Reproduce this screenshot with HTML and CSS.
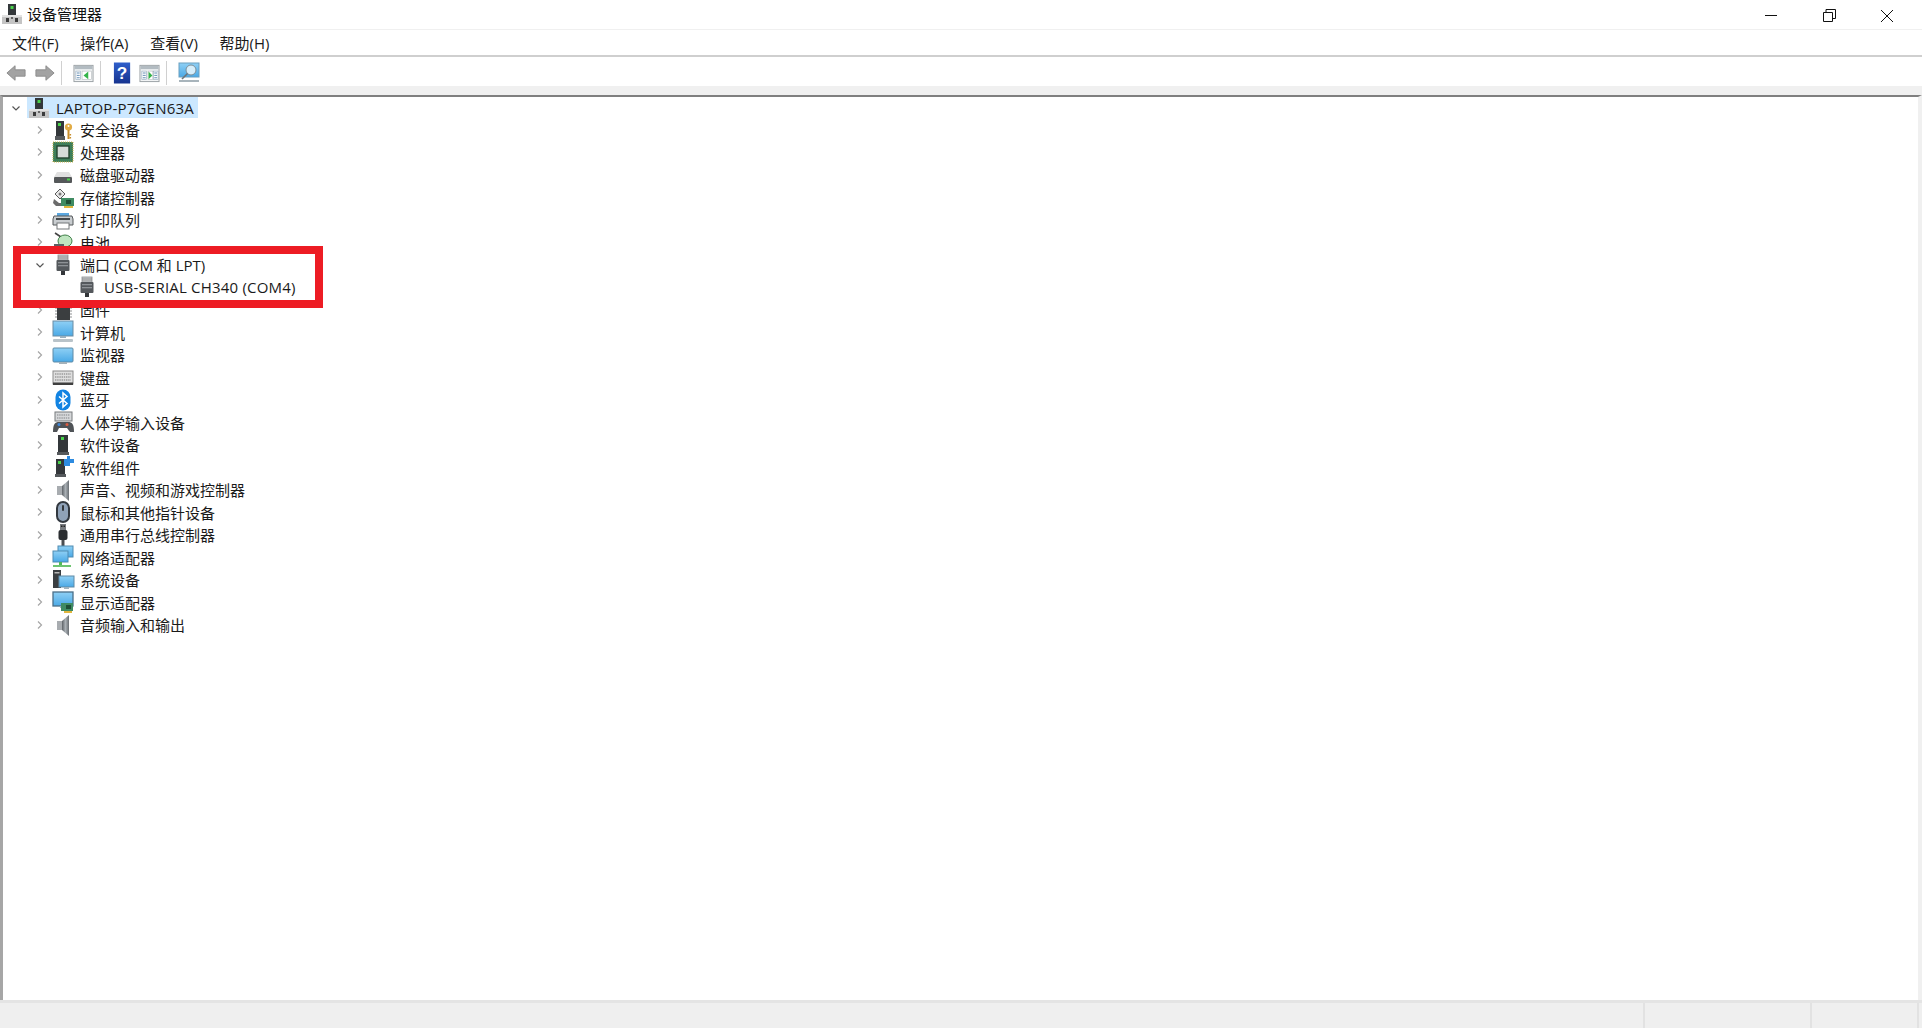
FILE: index.html
```html
<!DOCTYPE html>
<html lang="zh-CN">
<head>
<meta charset="utf-8">
<title>设备管理器</title>
<link rel="stylesheet" href="styles.css">
</head>
<body>
<svg class="defs" width="0" height="0" aria-hidden="true">
  <defs>
    <linearGradient id="screen" x1="0" y1="0" x2="0" y2="1"><stop offset="0" stop-color="#8fd0f5"/><stop offset="1" stop-color="#4aa9e6"/></linearGradient>
    <linearGradient id="metal" x1="0" y1="0" x2="1" y2="0"><stop offset="0" stop-color="#5e6368"/><stop offset=".5" stop-color="#aab0b5"/><stop offset="1" stop-color="#6a6f74"/></linearGradient>
    <linearGradient id="help" x1="0" y1="0" x2="0" y2="1"><stop offset="0" stop-color="#2f5fcb"/><stop offset="1" stop-color="#16338f"/></linearGradient>
    <symbol id="i-host" viewBox="0 0 24 24"><rect x="8" y="2" width="8" height="13" fill="#33373a"/><rect x="10.5" y="4" width="3" height="3" fill="#49d24a"/><rect x="2" y="13" width="20" height="9" fill="#c4c4c4"/><rect x="2" y="13" width="20" height="2" fill="#e2e2e2"/><rect x="6" y="16" width="3" height="4" fill="#3c3c3c"/><rect x="15" y="16" width="3" height="4" fill="#3c3c3c"/><rect x="11" y="15" width="2" height="2" fill="#666"/></symbol>
    <symbol id="i-security" viewBox="0 0 24 24"><rect x="5" y="3" width="8" height="15" fill="#33373a"/><rect x="7" y="5" width="3" height="3" fill="#49d24a"/><rect x="4" y="18" width="10" height="4" fill="#55595c"/><circle cx="17.5" cy="9" r="3.6" fill="#e2ac45"/><circle cx="17.5" cy="8" r="1" fill="#fff"/><rect x="16.5" y="12" width="2" height="9" fill="#c78d2a"/><rect x="18.5" y="16" width="1.6" height="1.5" fill="#c78d2a"/><rect x="18.5" y="19" width="1.6" height="1.5" fill="#c78d2a"/></symbol>
    <symbol id="i-cpu" viewBox="0 0 24 24"><rect x="2" y="2" width="20" height="20" fill="#3e7f5a"/><rect x="2" y="2" width="20" height="20" fill="none" stroke="#c7b04a" stroke-width="1" stroke-dasharray="1 1"/><rect x="6" y="6" width="12" height="12" fill="#d6dcd8" stroke="#24442f" stroke-width="1.4"/></symbol>
    <symbol id="i-disk" viewBox="0 0 24 24"><path d="M6 9h12l3 5H3z" fill="#e0e0e0"/><rect x="3" y="14" width="18" height="6" rx="1" fill="#55585a"/><rect x="16" y="15.5" width="3" height="2" fill="#4ad04a"/></symbol>
    <symbol id="i-storage" viewBox="0 0 24 24"><path d="M4 9l5-5 5 5-5 5z" fill="#e8e8e8" stroke="#5a5a5a"/><circle cx="9" cy="9" r="1.5" fill="#7a7a7a"/><path d="M3 14l5 4h3v3H5l-3-3z" fill="#6b6b6b"/><rect x="10" y="13" width="13" height="8" fill="#3f8b62"/><rect x="15" y="15" width="5" height="4" fill="#1f4f36"/><rect x="13" y="21" width="9" height="2" fill="#e0b63e"/></symbol>
    <symbol id="i-printer" viewBox="0 0 24 24"><rect x="6" y="5" width="12" height="3" fill="#5ba7e0"/><path d="M3 8h18l1 3v6H2v-6z" fill="#c9cdd0" stroke="#55585b"/><rect x="5" y="10" width="14" height="2" fill="#44484b"/><rect x="6" y="15" width="12" height="6" fill="#fff" stroke="#75787a"/></symbol>
    <symbol id="i-battery" viewBox="0 0 24 24"><path d="M4 3l6 4" stroke="#444" stroke-width="1.6"/><ellipse cx="14" cy="11" rx="7" ry="6" fill="#bfe5c0" stroke="#3f7f48"/><rect x="3" y="14" width="10" height="5" fill="#5d6164"/><rect x="11" y="16" width="11" height="6" fill="#e0b63e"/></symbol>
    <symbol id="i-port" viewBox="0 0 24 24"><rect x="7" y="2" width="10" height="5" fill="#c9ccce" stroke="#8a8d90" stroke-width=".8"/><path d="M8 3v3M10 3v3M12 3v3M14 3v3M16 3v3" stroke="#777" stroke-width=".7"/><rect x="5.5" y="7" width="13" height="11" rx="1" fill="#54585c"/><rect x="7" y="9" width="10" height="1.3" fill="#8e9296"/><rect x="7" y="12" width="10" height="1.3" fill="#8e9296"/><rect x="10" y="18" width="4" height="4" fill="#33363a"/></symbol>
    <symbol id="i-firmware" viewBox="0 0 24 24"><rect x="6" y="2" width="13" height="20" fill="#3b3e40"/><path d="M4 4h2M4 7h2M4 10h2M4 13h2M4 16h2M4 19h2M19 4h2M19 7h2M19 10h2M19 13h2M19 16h2M19 19h2" stroke="#8d9092" stroke-width="1.2"/><rect x="8" y="4" width="9" height="3" fill="#6a6d70"/></symbol>
    <symbol id="i-computer" viewBox="0 0 24 24"><rect x="2" y="1" width="20" height="15" fill="url(#screen)" stroke="#6a8ca3"/><rect x="9" y="16" width="6" height="2" fill="#9ab0be"/><rect x="2" y="19" width="20" height="3" rx="1" fill="#b9c3c9"/></symbol>
    <symbol id="i-monitor" viewBox="0 0 24 24"><rect x="2" y="5" width="20" height="14" rx="1" fill="url(#screen)" stroke="#5e8aa6"/><rect x="8" y="19" width="8" height="2" fill="#a5b2ba"/></symbol>
    <symbol id="i-keyboard" viewBox="0 0 24 24"><rect x="2" y="6" width="20" height="13" fill="#dfdfdf" stroke="#8b8b8b"/><path d="M4 9h16M4 12h16M4 15h16" stroke="#9b9b9b" stroke-width="1.4" stroke-dasharray="1.4 .8"/><rect x="2" y="17.5" width="20" height="2.5" fill="#3f3f3f"/></symbol>
    <symbol id="i-bluetooth" viewBox="0 0 24 24"><rect x="4.5" y="1.5" width="15" height="21" rx="7.5" fill="#1283e2"/><path d="M8 8.5l8 7-4 3.5V5l4 3.5-8 7" fill="none" stroke="#fff" stroke-width="1.5"/></symbol>
    <symbol id="i-hid" viewBox="0 0 24 24"><rect x="4" y="2" width="17" height="9" fill="#d6d8da" stroke="#777a7d"/><path d="M6 5h13M6 8h13" stroke="#808386" stroke-dasharray="1.4 .8"/><path d="M2 22c0-8 2-10 6-10h9c4 0 6 2 6 10h-4l-3-4H8l-2 4z" fill="#4f5357"/><circle cx="8" cy="14.5" r="1.5" fill="#3f86d8"/><circle cx="16" cy="14.5" r="1.5" fill="#d85a3f"/></symbol>
    <symbol id="i-swdev" viewBox="0 0 24 24"><rect x="7" y="2" width="10" height="17" fill="#33373a"/><rect x="10" y="4" width="3" height="3" fill="#49d24a"/><rect x="6" y="19" width="12" height="3" fill="#55595c"/></symbol>
    <symbol id="i-swcomp" viewBox="0 0 24 24"><rect x="5" y="4" width="9" height="15" fill="#33373a"/><rect x="7" y="6" width="3" height="3" fill="#49d24a"/><rect x="4" y="19" width="11" height="3" fill="#55595c"/><path d="M13 4h3V1h3v3h4v4h-4v3h-6z" fill="#2d8be0"/></symbol>
    <symbol id="i-sound" viewBox="0 0 24 24"><rect x="6" y="8" width="5" height="9" fill="#a8acb0"/><path d="M11 8l7-6v21l-7-6z" fill="url(#metal)"/></symbol>
    <symbol id="i-mouse" viewBox="0 0 24 24"><rect x="5" y="1" width="14" height="22" rx="7" fill="#32383f"/><rect x="7" y="3" width="10" height="18" rx="5" fill="#8fa2b8"/><rect x="11" y="5" width="2" height="6" rx="1" fill="#33383d"/></symbol>
    <symbol id="i-usb" viewBox="0 0 24 24"><rect x="9" y="1" width="6" height="6" fill="#777b7f"/><rect x="10" y="2.5" width="1.5" height="1.5" fill="#222"/><rect x="12.5" y="2.5" width="1.5" height="1.5" fill="#222"/><rect x="7.5" y="7" width="9" height="10" rx="2" fill="#2b2e31"/><rect x="10.5" y="17" width="3" height="6" fill="#4a4e52"/></symbol>
    <symbol id="i-network" viewBox="0 0 24 24"><rect x="7" y="1" width="15" height="11" fill="url(#screen)" stroke="#4f8bb2"/><rect x="2" y="6" width="15" height="11" fill="url(#screen)" stroke="#4f8bb2"/><rect x="8" y="17" width="3" height="3" fill="#54b85a"/><rect x="2" y="20" width="18" height="2" fill="#6fc470"/></symbol>
    <symbol id="i-system" viewBox="0 0 24 24"><rect x="2" y="2" width="8" height="18" fill="#3a3e41"/><rect x="3.5" y="4" width="5" height="1.5" fill="#b7b7b7"/><rect x="8" y="8" width="15" height="11" fill="url(#screen)" stroke="#5e8aa6"/><rect x="13" y="19" width="5" height="2" fill="#9fb2bd"/></symbol>
    <symbol id="i-display" viewBox="0 0 24 24"><rect x="2" y="2" width="20" height="14" fill="url(#screen)" stroke="#4a6f88" stroke-width="1.3"/><rect x="9" y="16" width="5" height="2" fill="#9fb2bd"/><rect x="10" y="13" width="12" height="8" fill="#3f8b62"/><rect x="15" y="15" width="5" height="4" fill="#1f4f36"/><rect x="13" y="21" width="8" height="2" fill="#e0b63e"/></symbol>
    <symbol id="i-chev-r" viewBox="0 0 16 16"><path d="M6 4.500L9.500 8 6 11.500" fill="none" stroke="#a6a6a6" stroke-width="1.200"/></symbol>
    <symbol id="i-chev-d" viewBox="0 0 16 16"><path d="M4.500 6.500L8 10l3.500-3.500" fill="none" stroke="#555" stroke-width="1.200"/></symbol>
    <symbol id="i-panel" viewBox="0 0 22 22"><rect x="1" y="3" width="20" height="17" fill="#f2f4f5" stroke="#9aa0a4"/><rect x="1.500" y="3.500" width="19" height="3.500" fill="#b3bcc2"/><rect x="3" y="9" width="5" height="9" fill="#fff" stroke="#8ba3b8" stroke-width=".6"/><path d="M4 11h3M4 13.500h3M4 16h3" stroke="#5c88b0"/></symbol>
  </defs>
</svg>
<div class="window">
  <header class="titlebar">
    <svg class="title-icon"><use href="#i-host"/></svg>
    <span class="title-text">设备管理器</span>
    <div class="controls">
      <svg class="ctl" viewBox="0 0 48 24"><path d="M18 13.500h12" stroke="#111" fill="none"/></svg>
      <svg class="ctl" viewBox="0 0 48 24"><path d="M18.500 10.500h9v9h-9zM21 10V7.500h9.500v9H28" stroke="#111" fill="none"/></svg>
      <svg class="ctl" viewBox="0 0 48 24"><path d="M18 8l12 12M30 8L18 20" stroke="#111" fill="none"/></svg>
    </div>
  </header>
  <nav class="menubar">
    <span class="menu-item">文件(F)</span>
    <span class="menu-item">操作(A)</span>
    <span class="menu-item">查看(V)</span>
    <span class="menu-item">帮助(H)</span>
  </nav>
  <div class="toolbar">
    <svg class="tool tool-arrow" viewBox="0 0 22 22"><path d="M1 11l9-8v4.500h11v7H10V19z" fill="#a3a3a3" stroke="#8a8a8a"/></svg>
    <svg class="tool tool-arrow tool-next" viewBox="0 0 22 22"><path d="M21 11l-9-8v4.500H1v7h11V19z" fill="#a3a3a3" stroke="#8a8a8a"/></svg>
    <i class="tool-sep"></i>
    <svg class="tool" viewBox="0 0 22 22"><use href="#i-panel"/><rect x="9.500" y="9" width="10" height="9" fill="#fff" stroke="#b0b6ba" stroke-width=".6"/><path d="M11 13.500l5-4v8z" fill="#35b44a"/></svg>
    <i class="tool-sep"></i>
    <svg class="tool tool-help" viewBox="0 0 22 24"><rect x="2" y="1" width="17" height="22" fill="url(#help)"/><text class="help-mark" x="10.500" y="18">?</text></svg>
    <svg class="tool" viewBox="0 0 22 22"><use href="#i-panel"/><rect x="9.500" y="9" width="5" height="9" fill="#fff" stroke="#b0b6ba" stroke-width=".6"/><path d="M10 9.500l4 4-4 4z" fill="#35b44a"/><rect x="15" y="9" width="5" height="9" fill="#fff" stroke="#8ba3b8" stroke-width=".6"/><path d="M16 11h3M16 13.500h3M16 16h3" stroke="#5c88b0"/></svg>
    <i class="tool-sep"></i>
    <svg class="tool tool-find" viewBox="0 0 22 22"><rect x="1" y="1" width="20" height="14" fill="url(#screen)" stroke="#6a9fc0"/><circle cx="13" cy="8" r="5" fill="#d6eefb" stroke="#7d8d96"/><path d="M9.500 11.500L4 17" stroke="#6d7479" stroke-width="1.600"/><rect x="1" y="18" width="20" height="2" fill="#a8b4bb"/></svg>
  </div>
  <div class="band"></div>
  <main class="tree">
    <div class="row root-row depth0"><svg class="chev"><use href="#i-chev-d"/></svg><span class="root-label"><svg class="icon"><use href="#i-host"/></svg><span class="latin">LAPTOP-P7GEN63A</span></span></div>
    <div class="row depth1"><svg class="chev"><use href="#i-chev-r"/></svg><svg class="icon"><use href="#i-security"/></svg><span>安全设备</span></div>
    <div class="row depth1"><svg class="chev"><use href="#i-chev-r"/></svg><svg class="icon"><use href="#i-cpu"/></svg><span>处理器</span></div>
    <div class="row depth1"><svg class="chev"><use href="#i-chev-r"/></svg><svg class="icon"><use href="#i-disk"/></svg><span>磁盘驱动器</span></div>
    <div class="row depth1"><svg class="chev"><use href="#i-chev-r"/></svg><svg class="icon"><use href="#i-storage"/></svg><span>存储控制器</span></div>
    <div class="row depth1"><svg class="chev"><use href="#i-chev-r"/></svg><svg class="icon"><use href="#i-printer"/></svg><span>打印队列</span></div>
    <div class="row depth1"><svg class="chev"><use href="#i-chev-r"/></svg><svg class="icon"><use href="#i-battery"/></svg><span>电池</span></div>
    <div class="row depth1"><svg class="chev"><use href="#i-chev-d"/></svg><svg class="icon"><use href="#i-port"/></svg><span>端口 (COM 和 LPT)</span></div>
    <div class="row depth2"><span class="chev"></span><svg class="icon"><use href="#i-port"/></svg><span class="latin">USB-SERIAL CH340 (COM4)</span></div>
    <div class="row depth1"><svg class="chev"><use href="#i-chev-r"/></svg><svg class="icon"><use href="#i-firmware"/></svg><span>固件</span></div>
    <div class="row depth1"><svg class="chev"><use href="#i-chev-r"/></svg><svg class="icon"><use href="#i-computer"/></svg><span>计算机</span></div>
    <div class="row depth1"><svg class="chev"><use href="#i-chev-r"/></svg><svg class="icon"><use href="#i-monitor"/></svg><span>监视器</span></div>
    <div class="row depth1"><svg class="chev"><use href="#i-chev-r"/></svg><svg class="icon"><use href="#i-keyboard"/></svg><span>键盘</span></div>
    <div class="row depth1"><svg class="chev"><use href="#i-chev-r"/></svg><svg class="icon"><use href="#i-bluetooth"/></svg><span>蓝牙</span></div>
    <div class="row depth1"><svg class="chev"><use href="#i-chev-r"/></svg><svg class="icon"><use href="#i-hid"/></svg><span>人体学输入设备</span></div>
    <div class="row depth1"><svg class="chev"><use href="#i-chev-r"/></svg><svg class="icon"><use href="#i-swdev"/></svg><span>软件设备</span></div>
    <div class="row depth1"><svg class="chev"><use href="#i-chev-r"/></svg><svg class="icon"><use href="#i-swcomp"/></svg><span>软件组件</span></div>
    <div class="row depth1"><svg class="chev"><use href="#i-chev-r"/></svg><svg class="icon"><use href="#i-sound"/></svg><span>声音、视频和游戏控制器</span></div>
    <div class="row depth1"><svg class="chev"><use href="#i-chev-r"/></svg><svg class="icon"><use href="#i-mouse"/></svg><span>鼠标和其他指针设备</span></div>
    <div class="row depth1"><svg class="chev"><use href="#i-chev-r"/></svg><svg class="icon"><use href="#i-usb"/></svg><span>通用串行总线控制器</span></div>
    <div class="row depth1"><svg class="chev"><use href="#i-chev-r"/></svg><svg class="icon"><use href="#i-network"/></svg><span>网络适配器</span></div>
    <div class="row depth1"><svg class="chev"><use href="#i-chev-r"/></svg><svg class="icon"><use href="#i-system"/></svg><span>系统设备</span></div>
    <div class="row depth1"><svg class="chev"><use href="#i-chev-r"/></svg><svg class="icon"><use href="#i-display"/></svg><span>显示适配器</span></div>
    <div class="row depth1"><svg class="chev"><use href="#i-chev-r"/></svg><svg class="icon"><use href="#i-sound"/></svg><span>音频输入和输出</span></div>
    <div class="callout"></div>
  </main>
  <footer class="statusbar">
    <div class="status-main"></div>
    <div class="status-a"></div>
    <div class="status-b"></div>
  </footer>
</div>
</body>
</html>
```
FILE: styles.css
```css
* { box-sizing: border-box; }
html, body { margin: 0; height: 100%; overflow: hidden; }
body {
  background: #fff;
  color: #1a1a1a;
  font-family: "Open Sans", "Noto Sans CJK SC", sans-serif;
  font-size: 15px;
}
.defs { position: absolute; }
.window { display: flex; flex-direction: column; height: 100%; }

.titlebar { display: flex; align-items: center; height: 29px; padding: 0 0 2px 0; flex: none; }
.title-icon { width: 24px; height: 24px; flex: none; }
.title-text { margin-left: 3px; color: #111; }
.controls { display: flex; margin-left: auto; margin-right: 11px; gap: 10px; }
.ctl { width: 48px; height: 24px; display: block; }

.menubar { display: flex; align-items: center; gap: 21.6px; height: 28px; padding-left: 12px; flex: none; border-top: 1px solid #f0f0f0; border-bottom: 2px solid #cfcfcf; }
.menu-item { white-space: nowrap; }

.toolbar { display: flex; align-items: center; height: 29px; padding: 2px 0 0 6px; flex: none; }
.tool { width: 21px; height: 22px; flex: none; }
.tool-arrow { width: 20px; }
.tool-next { margin-left: 9px; }
.tool-sep { width: 1px; height: 24px; background: #d0d0d0; margin: 0 11px 0 6px; flex: none; }
.tool-help { margin-right: 6px; height: 24px; }
.tool-find { width: 22px; }
.help-mark { font-family: "Liberation Sans", sans-serif; font-size: 18px; font-weight: 700; fill: #fff; text-anchor: middle; }

.band { height: 9px; flex: none; background: #f0f0f0; }

.tree { position: relative; flex: 1; min-height: 0; background: #fff; border-top: 2px solid #7f7f7f; border-left: 3px solid #a6a6a6; border-right: 4px solid #f0f0f0; }
.row { display: flex; align-items: center; height: 22.5px; white-space: nowrap; }
.root-row { height: 21.5px; }
.depth0 { padding-left: 5px; }
.depth1 { padding-left: 29px; }
.depth2 { padding-left: 53px; }
.chev { width: 16px; height: 16px; flex: none; margin-right: 3px; }
.icon { width: 24px; height: 24px; flex: none; margin-right: 5px; }
.latin { letter-spacing: .2px; }
.root-label { display: flex; align-items: center; height: 21px; background: #cce8ff; padding-right: 4px; }

.callout { position: absolute; left: 10px; top: 149px; width: 310px; height: 62px; border: 8px solid #ed1c24; }

.statusbar { display: flex; height: 28px; flex: none; background: #efefef; border-top: 3px solid #e4e4e4; }
.status-main { width: 1645px; border-right: 2px solid #e2e2e2; }
.status-a { width: 167px; border-right: 2px solid #e2e2e2; }
.status-b { width: 107px; border-right: 2px solid #e2e2e2; }
```
